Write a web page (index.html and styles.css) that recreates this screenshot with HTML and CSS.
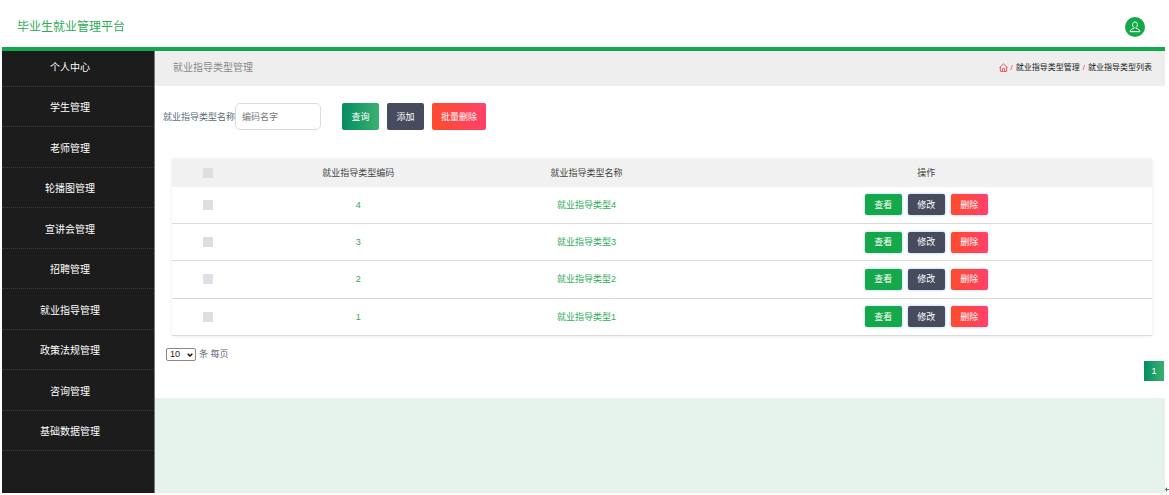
FILE: index.html
```html
<!DOCTYPE html>
<html lang="zh-CN">
<head>
<meta charset="utf-8">
<meta name="viewport" content="width=device-width, initial-scale=1">
<title>毕业生就业管理平台</title>
<link rel="stylesheet" href="styles.css">
</head>
<body>
<div class="app">
  <header class="topbar">
    <h1 class="brand">毕业生就业管理平台</h1>
    <button class="avatar" type="button" aria-label="用户">
      <svg class="avatar-icon" viewBox="0 0 12 12" aria-hidden="true"><path d="M6 1C4.400 1 3.600 2.100 3.600 3.600C3.600 5 4.100 5.900 5 6.500V7.300C3 7.800 1.300 8.700 1.100 10.700H10.900C10.700 8.700 9 7.800 7 7.300V6.500C7.900 5.900 8.400 5 8.400 3.600C8.400 2.100 7.600 1 6 1Z"/></svg>
    </button>
  </header>
  <div class="body">
    <nav class="sidebar">
      <ul class="menu">
        <li class="menu-item"><a class="menu-link" href="#">个人中心</a></li>
        <li class="menu-item"><a class="menu-link" href="#">学生管理</a></li>
        <li class="menu-item"><a class="menu-link" href="#">老师管理</a></li>
        <li class="menu-item"><a class="menu-link" href="#">轮播图管理</a></li>
        <li class="menu-item"><a class="menu-link" href="#">宣讲会管理</a></li>
        <li class="menu-item"><a class="menu-link" href="#">招聘管理</a></li>
        <li class="menu-item"><a class="menu-link" href="#">就业指导管理</a></li>
        <li class="menu-item"><a class="menu-link" href="#">政策法规管理</a></li>
        <li class="menu-item"><a class="menu-link" href="#">咨询管理</a></li>
        <li class="menu-item"><a class="menu-link" href="#">基础数据管理</a></li>
      </ul>
    </nav>
    <main class="content">
      <div class="titlebar">
        <h2 class="page-title">就业指导类型管理</h2>
        <div class="crumbs">
          <a class="home" href="#" aria-label="首页"><svg class="home-icon" viewBox="0 0 10 10" aria-hidden="true"><path d="M.6 5L5 1L9.400 5M1.500 4.300V9.300H8.500V4.300M3.800 9.300V6.200H6.200V9.300"/></svg></a>
          <span class="slash">/</span>
          <a class="crumb" href="#">就业指导类型管理</a>
          <span class="slash">/</span>
          <span class="crumb">就业指导类型列表</span>
        </div>
      </div>
      <div class="panel">
        <form class="search">
          <label class="search-label" for="name">就业指导类型名称</label>
          <input class="search-input" id="name" type="text" placeholder="编码名字">
          <div class="search-actions">
            <button class="btn btn-query" type="button">查询</button>
            <button class="btn btn-dark" type="button">添加</button>
            <button class="btn btn-danger" type="button">批量删除</button>
          </div>
        </form>
        <table class="grid">
          <thead>
            <tr><th class="col-check"><input class="tick" type="checkbox" aria-label="全选"></th><th class="col-code">就业指导类型编码</th><th class="col-name">就业指导类型名称</th><th>操作</th></tr>
          </thead>
          <tbody>
            <tr><td><input class="tick" type="checkbox" aria-label="选择 4"></td><td>4</td><td>就业指导类型4</td><td><div class="ops"><button class="btn btn-view" type="button">查看</button><button class="btn btn-dark" type="button">修改</button><button class="btn btn-danger" type="button">删除</button></div></td></tr>
            <tr><td><input class="tick" type="checkbox" aria-label="选择 3"></td><td>3</td><td>就业指导类型3</td><td><div class="ops"><button class="btn btn-view" type="button">查看</button><button class="btn btn-dark" type="button">修改</button><button class="btn btn-danger" type="button">删除</button></div></td></tr>
            <tr><td><input class="tick" type="checkbox" aria-label="选择 2"></td><td>2</td><td>就业指导类型2</td><td><div class="ops"><button class="btn btn-view" type="button">查看</button><button class="btn btn-dark" type="button">修改</button><button class="btn btn-danger" type="button">删除</button></div></td></tr>
            <tr><td><input class="tick" type="checkbox" aria-label="选择 1"></td><td>1</td><td>就业指导类型1</td><td><div class="ops"><button class="btn btn-view" type="button">查看</button><button class="btn btn-dark" type="button">修改</button><button class="btn btn-danger" type="button">删除</button></div></td></tr>
          </tbody>
        </table>
        <div class="page-size">
          <span class="size-box">
            <select class="size-select" id="size"><option>10</option><option>20</option><option>50</option></select>
            <svg class="size-arrow" viewBox="0 0 6 4" aria-hidden="true"><path d="M.7 .7L3 3L5.300 .7"/></svg>
          </span>
          <label for="size">条 每页</label>
        </div>
        <div class="pager"><button class="page-btn" type="button">1</button></div>
      </div>
    </main>
  </div>
</div>
<svg class="corner-mark" viewBox="0 0 4 5" aria-hidden="true"><path d="M0 2.500L2 0V2H4V3H2V5Z"/></svg>
</body>
</html>
```
FILE: styles.css
```css
* { box-sizing: border-box; }

body {
  margin: 0;
  background: #fff;
  color: #5c6b77;
  font: 9px/14px "Liberation Sans", "Noto Sans CJK SC", sans-serif;
}

a { color: inherit; text-decoration: none; }
button, input, select { font: inherit; }
button { cursor: pointer; }

.app {
  display: flex;
  flex-direction: column;
  min-height: 100vh;
  padding: 0 4px 2px 2px;
}

.topbar {
  display: flex;
  align-items: center;
  justify-content: space-between;
  height: 51px;
  padding: 7px 20px 0 15px;
  border-bottom: 4px solid #15a84a;
}

.brand {
  margin: 0;
  color: #2eab57;
  font-size: 12px;
  line-height: 20px;
  font-weight: 400;
}

.avatar {
  display: grid;
  place-items: center;
  width: 20px;
  height: 20px;
  padding: 0;
  border: 0;
  border-radius: 50%;
  background: #15a84a;
}

.avatar-icon { width: 12px; height: 12px; fill: none; stroke: #fff; }

.body { display: flex; flex: 1; }

.sidebar {
  display: flex;
  flex: 0 0 153px;
  padding-bottom: 42px;
  border-right: 1px solid #777;
  background: #1c1c1c;
}

.menu {
  display: grid;
  flex: 1;
  grid-template-rows: 36px repeat(9, 1fr);
  margin: 0;
  padding: 0;
  list-style: none;
}

.menu-item {
  display: flex;
  align-items: flex-end;
  justify-content: center;
  padding: 0 16px 8px 0;
  border-bottom: 1px dotted #343d4b;
}

.menu-link {
  color: #fff;
  font-size: 10px;
  line-height: 20px;
}

.content { flex: 1; min-width: 0; background: #e5f3ec; }

.titlebar {
  display: flex;
  align-items: center;
  justify-content: space-between;
  height: 35px;
  padding: 0 13px 2px 18px;
  background: #eee;
}

.page-title {
  margin: 0;
  color: #8c8888;
  font-size: 10px;
  font-weight: 400;
}

.crumbs {
  display: flex;
  align-items: center;
  gap: 3px;
  color: #222;
  font-size: 8px;
}

.home { display: flex; }
.home-icon { width: 9px; height: 9px; fill: none; stroke: #ee4b50; }
.slash { color: #e33; }

.panel { padding: 17px 0; background: #fff; }

.search {
  display: flex;
  align-items: center;
  margin-bottom: 29px;
  padding-left: 8px;
}

.search-input {
  width: 86px;
  height: 27px;
  padding: 0 6px;
  border: 1px solid #dcdcdf;
  border-radius: 5px;
  background: #fff;
  outline: 0;
}

.search-input::placeholder { color: #777; opacity: 1; }

.search-actions { display: flex; gap: 8px; margin-left: 21px; }

.btn {
  min-width: 37px;
  height: 21px;
  padding: 0 9px;
  border: 0;
  border-radius: 2px;
  color: #fff;
}

.search .btn { height: 27px; }
.btn-query { background: linear-gradient(90deg, #068c61, #3bb072); }
.btn-view { background: #15a84a; }
.btn-dark { background: #464c5e; }
.btn-danger { background: linear-gradient(90deg, #ff4b2b, #ff416c); }

.grid {
  width: calc(100% - 30px);
  height: 177px;
  margin: 0 13px 0 17px;
  border-collapse: collapse;
  table-layout: fixed;
  color: #2eab57;
  text-align: center;
  box-shadow: 0 0 3px #e8e8e8;
}

.grid th,
.grid td { padding: 0; }

.grid th {
  height: 28px;
  background: #f1f1f1;
  color: #444;
  font-weight: 400;
}

.grid td { border-bottom: 1px solid #d9d9d9; }

.grid .col-check { width: 72px; }
.col-code { width: 23.3%; }
.col-name { width: 23.3%; }

.tick {
  display: block;
  width: 10px;
  height: 10px;
  margin: 0 auto;
  appearance: none;
  background: #dce0e4;
}

.tick:checked { background: #15a84a; }

.ops { display: flex; justify-content: center; gap: 6px; }
.ops .btn { box-shadow: 0 0 3px #9cc8ee; }

.page-size {
  display: flex;
  align-items: center;
  gap: 3px;
  margin-top: 11px;
  padding-left: 11px;
}

.size-box { display: flex; position: relative; }

.size-select {
  width: 30px;
  height: 13px;
  padding: 0 3px;
  border: 1px solid #888;
  border-radius: 2px;
  appearance: none;
  background: #fff;
  color: #222;
  line-height: 11px;
}

.size-arrow {
  position: absolute;
  top: 5px;
  right: 3px;
  width: 6px;
  height: 4px;
  fill: none;
  stroke: #111;
  stroke-width: 1.5;
  pointer-events: none;
}

.pager { display: flex; justify-content: flex-end; padding-right: 1px; }

.page-btn {
  width: 20px;
  height: 20px;
  padding: 0;
  border: 0;
  background: linear-gradient(90deg, #068c61, #3bb072);
  color: #fff;
}

.corner-mark {
  position: absolute;
  right: 0;
  bottom: 3px;
  width: 4px;
  height: 5px;
  fill: #666;
}
```
